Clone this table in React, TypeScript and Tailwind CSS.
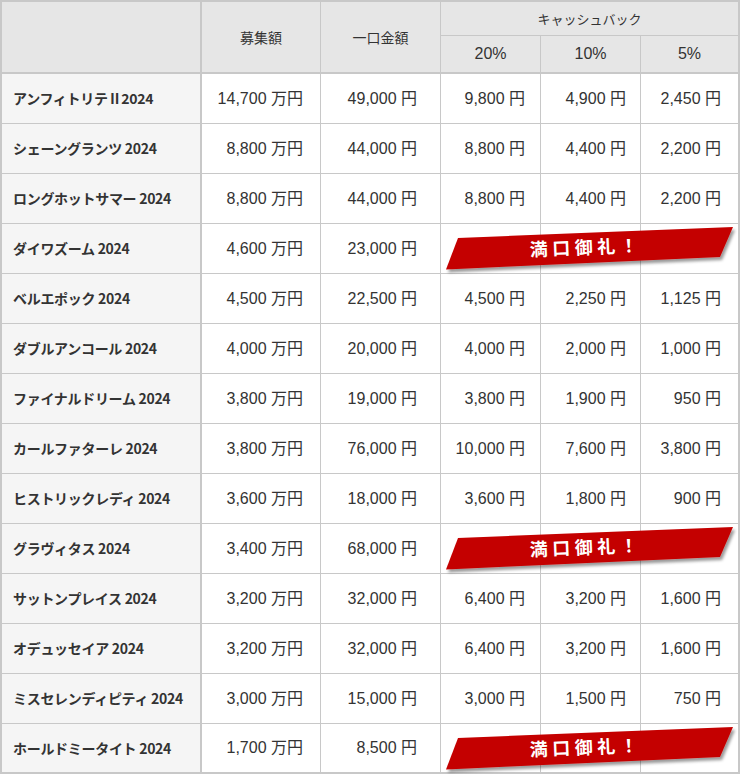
import React from 'react'

interface Fund {
  name: string
  total: string
  unit: string
  cb?: [string, string, string]
}

const funds: Fund[] = [
  { name: 'アンフィトリテⅡ2024', total: '14,700', unit: '49,000', cb: ['9,800', '4,900', '2,450'] },
  { name: 'シェーングランツ 2024', total: '8,800', unit: '44,000', cb: ['8,800', '4,400', '2,200'] },
  { name: 'ロングホットサマー 2024', total: '8,800', unit: '44,000', cb: ['8,800', '4,400', '2,200'] },
  { name: 'ダイワズーム 2024', total: '4,600', unit: '23,000' },
  { name: 'ベルエポック 2024', total: '4,500', unit: '22,500', cb: ['4,500', '2,250', '1,125'] },
  { name: 'ダブルアンコール 2024', total: '4,000', unit: '20,000', cb: ['4,000', '2,000', '1,000'] },
  { name: 'ファイナルドリーム 2024', total: '3,800', unit: '19,000', cb: ['3,800', '1,900', '950'] },
  { name: 'カールファターレ 2024', total: '3,800', unit: '76,000', cb: ['10,000', '7,600', '3,800'] },
  { name: 'ヒストリックレディ 2024', total: '3,600', unit: '18,000', cb: ['3,600', '1,800', '900'] },
  { name: 'グラヴィタス 2024', total: '3,400', unit: '68,000' },
  { name: 'サットンプレイス 2024', total: '3,200', unit: '32,000', cb: ['6,400', '3,200', '1,600'] },
  { name: 'オデュッセイア 2024', total: '3,200', unit: '32,000', cb: ['6,400', '3,200', '1,600'] },
  { name: 'ミスセレンディピティ 2024', total: '3,000', unit: '15,000', cb: ['3,000', '1,500', '750'] },
  { name: 'ホールドミータイト 2024', total: '1,700', unit: '8,500' },
]

const cols = 'grid grid-cols-[200px_119px_120px_100px_100px_99px]'
const line = 'border-[#c8c8c8]'
const num = "font-['Liberation_Sans','Noto_Sans_CJK_JP',sans-serif] text-[16px]"

// 満口御礼の帯
function SoldOut() {
  return (
    <svg
      className="absolute left-[439px] top-0 overflow-visible"
      width="299"
      height="49"
      viewBox="0 0 299 49"
    >
      <defs>
        <filter id="shadow" x="-10%" y="-30%" width="120%" height="170%">
          <feDropShadow dx="2" dy="3" stdDeviation="1.8" floodColor="#000" floodOpacity="0.4" />
        </filter>
      </defs>
      <polygon points="17,14 292,3 279,33 5,45.5" fill="#c40000" filter="url(#shadow)" />
      <text
        x="145"
        y="30"
        textAnchor="middle"
        transform="rotate(-2.3 145 24)"
        fill="#fff"
        fontSize="18"
        fontWeight="700"
        letterSpacing="4.5"
        fontFamily="'Noto Sans CJK JP', sans-serif"
      >
        満口御礼！
      </text>
    </svg>
  )
}

export default function App() {
  return (
    <div className="w-[740px] bg-white text-[#333] font-['Noto_Sans_CJK_JP','Noto_Sans',sans-serif]">
      <div className={`border-l-2 border-t-2 ${line}`}>
        {/* ヘッダー */}
        <div className={`${cols} grid-rows-[34px_38px] bg-[#e6e6e6] text-[14px]`}>
          <div className={`row-span-2 border-r-2 border-b-2 ${line}`} />
          <div className={`row-span-2 flex items-center justify-center border-r border-b-2 ${line}`}>
            募集額
          </div>
          <div className={`row-span-2 flex items-center justify-center border-r border-b-2 ${line}`}>
            一口金額
          </div>
          <div className={`col-span-3 flex items-center justify-center border-r-2 border-b text-[13px] ${line}`}>
            キャッシュバック
          </div>
          <div className={`flex items-center justify-center border-r border-b-2 ${num} ${line}`}>20%</div>
          <div className={`flex items-center justify-center border-r border-b-2 ${num} ${line}`}>10%</div>
          <div className={`flex items-center justify-center border-r-2 border-b-2 ${num} ${line}`}>5%</div>
        </div>

        {/* 本体 */}
        {funds.map((f, i) => {
          const last = i === funds.length - 1
          const bb = last ? 'border-b-2' : 'border-b'
          return (
            <div key={f.name} className={`relative ${cols} h-[50px]`}>
              <div
                className={`flex items-center bg-[#f5f5f5] pl-[11px] text-[14px] font-semibold tracking-[-0.3px] border-r-2 ${bb} ${line}`}
              >
                {f.name}
              </div>
              <div className={`flex items-center justify-end pr-[17px] border-r ${num} ${bb} ${line}`}>
                {f.total} 万円
              </div>
              <div className={`flex items-center justify-end pr-[23px] border-r ${num} ${bb} ${line}`}>
                {f.unit} 円
              </div>
              <div className={`flex items-center justify-end pr-[15px] border-r ${num} ${bb} ${line}`}>
                {f.cb ? `${f.cb[0]} 円` : ''}
              </div>
              <div className={`flex items-center justify-end pr-[14px] border-r ${num} ${bb} ${line}`}>
                {f.cb ? `${f.cb[1]} 円` : ''}
              </div>
              <div className={`flex items-center justify-end pr-[17px] border-r-2 ${num} ${bb} ${line}`}>
                {f.cb ? `${f.cb[2]} 円` : ''}
              </div>
              {!f.cb && <SoldOut />}
            </div>
          )
        })}
      </div>
    </div>
  )
}
